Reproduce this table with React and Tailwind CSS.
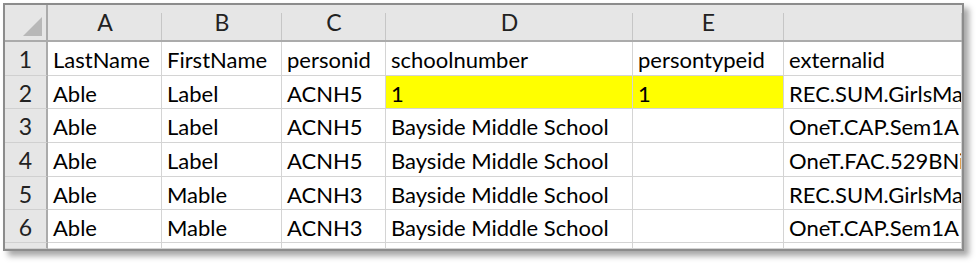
const cols = ['A', 'B', 'C', 'D', 'E', '']

const rows = [
  ['LastName', 'FirstName', 'personid', 'schoolnumber', 'persontypeid', 'externalid'],
  ['Able', 'Label', 'ACNH5', '1', '1', 'REC.SUM.GirlsMa'],
  ['Able', 'Label', 'ACNH5', 'Bayside Middle School', '', 'OneT.CAP.Sem1A'],
  ['Able', 'Label', 'ACNH5', 'Bayside Middle School', '', 'OneT.FAC.529BNi'],
  ['Able', 'Mable', 'ACNH3', 'Bayside Middle School', '', 'REC.SUM.GirlsMa'],
  ['Able', 'Mable', 'ACNH3', 'Bayside Middle School', '', 'OneT.CAP.Sem1A'],
]

const rowHeights = ['h-[34px]', 'h-[33px]', 'h-[34px]', 'h-[34px]', 'h-[33px]', 'h-[33px]']

export default function App() {
  return (
    <div className="w-[977px] h-[264px] bg-white pl-[3px] pt-[3px]" style={{ fontFamily: 'Lato, "Liberation Sans", sans-serif' }}>
      <div className="w-[961px] h-[248px] border-2 border-[#8c8c8c] overflow-hidden shadow-[5px_5px_6px_rgba(0,0,0,0.35)]">
        <div className="grid grid-cols-[43px_114px_120px_104px_247px_151px_1fr] text-[22px] text-black">
          {/* corner */}
          <div className="h-[37px] bg-[#e6e6e6] border-r-2 border-b-2 border-[#ababab] relative">
            <div className="absolute right-[4px] bottom-[4px] w-0 h-0 border-l-[19px] border-l-transparent border-b-[19px] border-b-[#b8b8b8]" />
          </div>
          {cols.map((c, i) => (
            <div key={i} className="h-[37px] bg-[#e6e6e6] border-b-2 border-[#ababab] flex items-end justify-center pb-[1px] relative text-[23px] text-[#222]">
              {c}
              <div className="absolute right-0 top-[8px] bottom-0 w-px bg-[#c6c6c6]" />
            </div>
          ))}
          {rows.map((r, ri) => (
            <Row key={ri} num={ri + 1} cells={r} h={rowHeights[ri]} yellow={ri === 1} />
          ))}
          <Row num="" cells={['', '', '', '', '', '']} h="h-[6px]" />
        </div>
      </div>
    </div>
  )
}

function Row({ num, cells, h, yellow }) {
  return (
    <>
      <div className={`${h} bg-[#e6e6e6] border-r-2 border-b border-r-[#ababab] border-b-[#d0d0d0] flex items-center justify-center text-[23px] text-[#222] pt-[2px]`}>
        {num}
      </div>
      {cells.map((c, i) => (
        <div
          key={i}
          className={`${h} border-r border-b border-[#d4d4d4] flex items-center pl-[5px] pt-[2px] whitespace-nowrap overflow-hidden ${yellow && (i === 3 || i === 4) ? 'bg-[#ffff00]' : 'bg-white'}`}
        >
          {c}
        </div>
      ))}
    </>
  )
}
